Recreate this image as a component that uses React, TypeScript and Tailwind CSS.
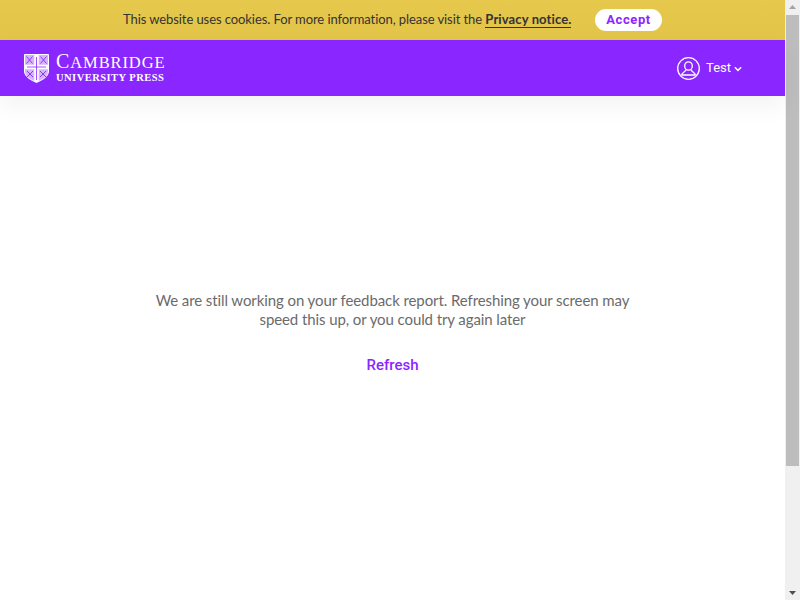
export default function App() {
  return (
    <div className="flex h-[600px] w-[800px] overflow-hidden bg-white">
      <div className="flex w-[785px] flex-col font-['Lato',sans-serif]">
        <div className="flex h-[40px] items-center bg-gradient-to-b from-[#e6c84c] to-[#e2c449] pl-[123px] text-[13px] tracking-[-0.08px] text-[#333333]">
          <span className="mb-[2px] w-[472px] whitespace-nowrap leading-[17px]">
            This website uses cookies. For more information, please visit the{" "}
            <span className="inline-block border-b border-[#333333] font-bold leading-[15px] tracking-[0.12px]">Privacy notice.</span>
          </span>
          <button className="h-[22px] w-[67px] rounded-full bg-white font-['Roboto',sans-serif] text-[13px] font-bold tracking-[0.6px] text-[#8a26ff]">
            Accept
          </button>
        </div>
        <header className="z-10 flex h-[56px] items-center justify-between bg-[#8a26ff] pl-[24px] pr-[43px] shadow-[0_10px_25px_rgba(0,0,0,0.05)]">
          <div className="flex items-center gap-[7px] text-white">
            <svg width="25" height="29" viewBox="0 0 25 29" fill="none">
              <path d="M0.5 0.5H24.5V17C24.5 23 18 26 12.5 28.5C7 26 0.5 23 0.5 17Z" fill="#ffffff" fillOpacity="0.65" stroke="#ffffff" />
              <path d="M12.5 1V28M1 13H24" stroke="#ffffff" strokeWidth="4.5" />
              <path d="M12.5 3V26M3 13H22" stroke="#8a26ff" strokeWidth="0.8" />
              <path d="M2.5 2.5l6 7M8.5 2.5l-6 7M16.5 2.5l6 7M22.5 2.5l-6 7M3 17l6 6M9 17l-6 6M16 17l6 6M22 17l-6 6" stroke="#8a26ff" strokeWidth="0.9" />
            </svg>
            <div className="mb-[1px] flex flex-col font-['Liberation_Serif',serif] leading-none">
              <span className="text-[20px] leading-[16px] tracking-[0.9px]">
                C<span className="text-[16.5px]">AMBRIDGE</span>
              </span>
              <span className="mt-[2px] text-[10.5px] font-bold leading-[10px] tracking-[0.47px]">UNIVERSITY PRESS</span>
            </div>
          </div>
          <div className="flex items-center text-white">
            <svg width="23" height="23" viewBox="0 0 23 23" fill="none" stroke="#ffffff" strokeWidth="1.3">
              <circle cx="11.5" cy="11.5" r="10.8" />
              <ellipse cx="11.5" cy="9" rx="3.8" ry="4.2" />
              <path d="M9 12.5C9 15 4.5 15 4.5 18.5M14 12.5C14 15 18.5 15 18.5 18.5M5 18H18" />
            </svg>
            <span className="ml-[6px] font-['Roboto',sans-serif] text-[13px]">Test</span>
            <svg className="ml-[3px] mt-[1px]" width="8" height="6" viewBox="0 0 8 6" fill="none" stroke="#ffffff" strokeWidth="1.5">
              <path d="M0.8 1.2L4 4.4L7.2 1.2" />
            </svg>
          </div>
        </header>
        <main className="flex flex-1 flex-col items-center pt-[195px]">
          <p className="w-[480px] text-center text-[15px] leading-[19px] tracking-[-0.09px] text-[#6b6b6b]">
            We are still working on your feedback report. Refreshing your screen may speed this up, or you could try again later
          </p>
          <button className="mt-[27px] font-['Roboto',sans-serif] text-[15px] font-medium leading-[19px] text-[#8a26ff]">
            Refresh
          </button>
        </main>
      </div>
      <div className="flex w-[15px] flex-col items-center bg-[#f0f0f0]">
        <svg className="h-[15px] w-[15px] shrink-0" viewBox="0 0 15 15" fill="#a3a3a3">
          <path d="M7.5 5L11 9H4Z" />
        </svg>
        <div className="h-[451px] w-[13px] shrink-0 bg-[#bdbdbd]" />
        <div className="flex-1" />
        <svg className="h-[15px] w-[15px] shrink-0" viewBox="0 0 15 15" fill="#505050">
          <path d="M7.5 10L4 6H11Z" />
        </svg>
      </div>
    </div>
  );
}
